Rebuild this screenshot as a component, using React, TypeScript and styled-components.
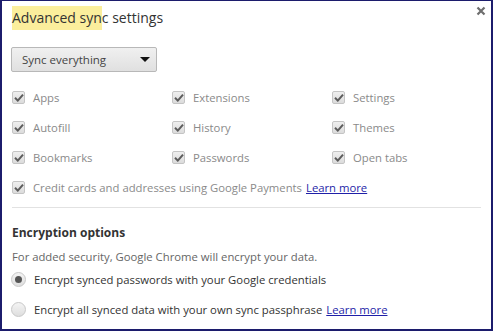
import React from "react";
import styled, { createGlobalStyle } from "styled-components";

const Global = createGlobalStyle`
  html, body { margin: 0; padding: 0; background: #fff; }
  body { font-family: "Open Sans", "Noto Sans", sans-serif; }
`;

const Frame = styled.div`
  width: 493px;
  height: 331px;
  box-sizing: border-box;
  border: 2px solid #1c1c6c;
  border-top-width: 1px;
  background: #fff;
  position: relative;
  padding: 0 0 0 9px;
  overflow: hidden;
`;

const Close = styled.div`
  position: absolute;
  top: 3px;
  right: 3px;
  width: 14px;
  height: 14px;
  display: flex;
  align-items: center;
  justify-content: center;
`;

const Title = styled.h1`
  margin: 5px 0 0 1px;
  font-size: 14px;
  font-weight: 400;
  line-height: 24px;
  height: 24px;
  color: #333;
`;

const Mark = styled.span`
  background: #fbee9c;
  display: inline-block;
  line-height: 24px;
`;

const Select = styled.div`
  margin-top: 17px;
  width: 146px;
  height: 25px;
  box-sizing: border-box;
  border: 1px solid #b8b8b8;
  border-radius: 2px;
  background: linear-gradient(#f0f0f0, #e0e0e0);
  display: flex;
  align-items: center;
  justify-content: space-between;
  padding: 0 6px 0 10px;
  font-size: 11.5px;
  color: #444;
`;

const Arrow = styled.span`
  width: 0;
  height: 0;
  border-left: 5px solid transparent;
  border-right: 5px solid transparent;
  border-top: 5px solid #111;
`;

const Grid = styled.div`
  margin-top: 10px;
  display: grid;
  grid-template-columns: 160px 160px 160px;
  grid-auto-rows: 30px;
`;

const Item = styled.label<{ $wide?: boolean }>`
  display: flex;
  align-items: center;
  gap: 8px;
  font-size: 11.3px;
  color: #8a8a8a;
  padding-left: 1px;
  ${(p) => (p.$wide ? "grid-column: 1 / -1;" : "")}
`;

const Box = styled.span`
  width: 13px;
  height: 13px;
  box-sizing: border-box;
  border: 1px solid #c4c4c4;
  border-radius: 2px;
  background: linear-gradient(#eeeeee, #dcdcdc);
  display: flex;
  align-items: center;
  justify-content: center;
  flex: none;
`;

const Link = styled.a`
  color: #1f1fa8;
  text-decoration: underline;
  margin-left: 4px;
`;

const Divider = styled.hr`
  margin: 5px 10px 0 1px;
  border: none;
  border-top: 1px solid #e2e2e2;
`;

const Heading = styled.h2`
  margin: 16px 0 0 1px;
  font-size: 12px;
  font-weight: 700;
  line-height: 18px;
  color: #333;
`;

const Note = styled.p`
  margin: 7px 0 0 1px;
  font-size: 11.3px;
  line-height: 16px;
  color: #666;
`;

const Radios = styled.div`
  margin-top: -1px;
  display: grid;
  grid-auto-rows: 30px;
`;

const RadioRow = styled.label`
  display: flex;
  align-items: center;
  gap: 8px;
  font-size: 11.3px;
  color: #333;
`;

const Radio = styled.span<{ $on?: boolean }>`
  width: 15px;
  height: 15px;
  box-sizing: border-box;
  border-radius: 50%;
  border: 1px solid #c8c8c8;
  background: linear-gradient(#f4f4f4, #dedede);
  display: flex;
  align-items: center;
  justify-content: center;
  flex: none;
  &::after {
    content: "";
    display: ${(p) => (p.$on ? "block" : "none")};
    width: 7px;
    height: 7px;
    border-radius: 50%;
    background: #555;
  }
`;

const Check = () => (
  <svg width="10" height="9" viewBox="0 0 10 9">
    <path d="M1 4.8 L3.8 7.6 L9 1.6" fill="none" stroke="#5c5c5c" strokeWidth="2" />
  </svg>
);

const items = [
  "Apps", "Extensions", "Settings",
  "Autofill", "History", "Themes",
  "Bookmarks", "Passwords", "Open tabs",
];

export default function App() {
  return (
    <>
      <Global />
      <Frame>
        <Close>
          <svg width="10" height="10" viewBox="0 0 10 10">
            <path d="M1.5 1.5 L8.5 8.5 M8.5 1.5 L1.5 8.5" stroke="#6e6e6e" strokeWidth="2.2" />
          </svg>
        </Close>
        <Title>
          <Mark>Advanced syn</Mark>c settings
        </Title>
        <Select>
          <span>Sync everything</span>
          <Arrow />
        </Select>
        <Grid>
          {items.map((t) => (
            <Item key={t}>
              <Box><Check /></Box>
              {t}
            </Item>
          ))}
          <Item $wide>
            <Box><Check /></Box>
            <span>
              Credit cards and addresses using Google Payments
              <Link href="#">Learn more</Link>
            </span>
          </Item>
        </Grid>
        <Divider />
        <Heading>Encryption options</Heading>
        <Note>For added security, Google Chrome will encrypt your data.</Note>
        <Radios>
          <RadioRow>
            <Radio $on />
            Encrypt synced passwords with your Google credentials
          </RadioRow>
          <RadioRow>
            <Radio />
            <span>
              Encrypt all synced data with your own sync passphrase
              <Link href="#">Learn more</Link>
            </span>
          </RadioRow>
        </Radios>
      </Frame>
    </>
  );
}
